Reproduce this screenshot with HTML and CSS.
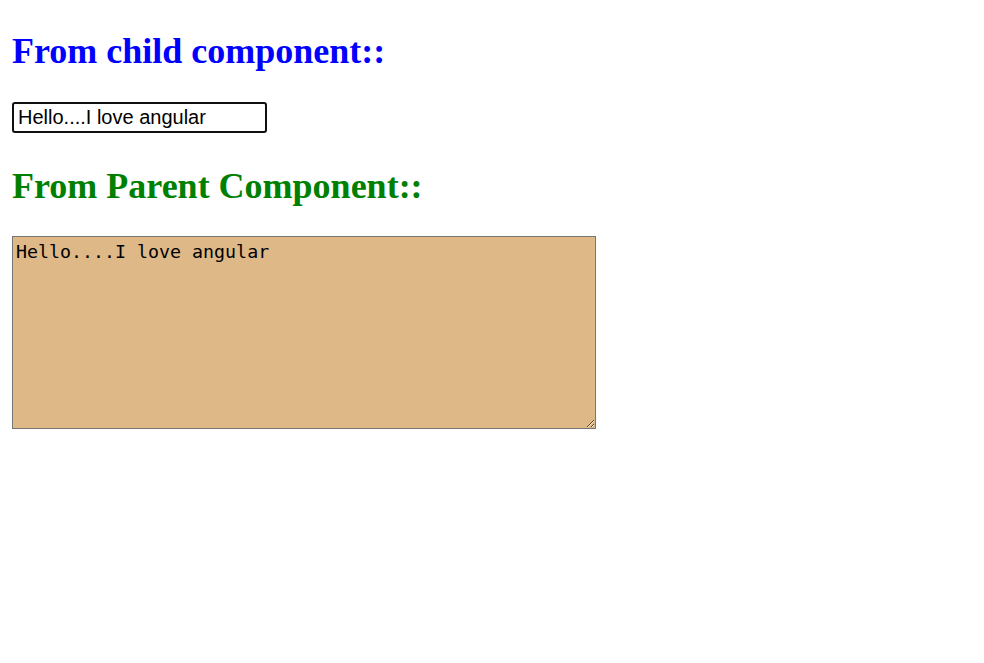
FILE: index.html
```html
<!DOCTYPE html>
<html>
<head>
<meta charset="utf-8">
<link rel="stylesheet" href="styles.css">
</head>
<body>
  <div class="child">
    <h2 class="title title-child">From child component::</h2>
    <input class="text-input" type="text" value="Hello....I love angular">
  </div>
  <div class="parent">
    <h2 class="title title-parent">From Parent Component::</h2>
    <textarea class="text-area">Hello....I love angular</textarea>
  </div>
</body>
</html>
```

FILE: styles.css
```css
html, body {
  background: #ffffff;
}
body {
  margin: 0;
  padding: 0 12px 12px 12px;
  font-family: "Liberation Serif", "Times New Roman", serif;
}
.title {
  font-family: "Liberation Serif", "Times New Roman", serif;
  font-size: 36px;
  font-weight: bold;
  margin: 30px 0 30px 0;
  line-height: normal;
}
.title-child {
  color: #0000ff;
}
.title-parent {
  color: #008000;
  margin-top: 32px;
  margin-bottom: 29px;
}
.text-input {
  display: block;
  box-sizing: border-box;
  width: 255px;
  height: 31px;
  margin: 2px 0 0 0;
  padding: 1px 4px;
  border: 2px solid #101010;
  border-radius: 3px;
  font-family: "Liberation Sans", Arial, sans-serif;
  font-size: 20px;
  color: #000000;
  background: #ffffff;
  outline: none;
}
.text-area {
  display: block;
  box-sizing: border-box;
  width: 584px;
  height: 193px;
  margin: 0;
  padding: 4px 3px 3px 3px;
  border: 1px solid #767676;
  background: #deb887;
  font-family: "DejaVu Sans Mono", Consolas, monospace;
  font-size: 18.3px;
  line-height: 21px;
  color: #000000;
}
```
